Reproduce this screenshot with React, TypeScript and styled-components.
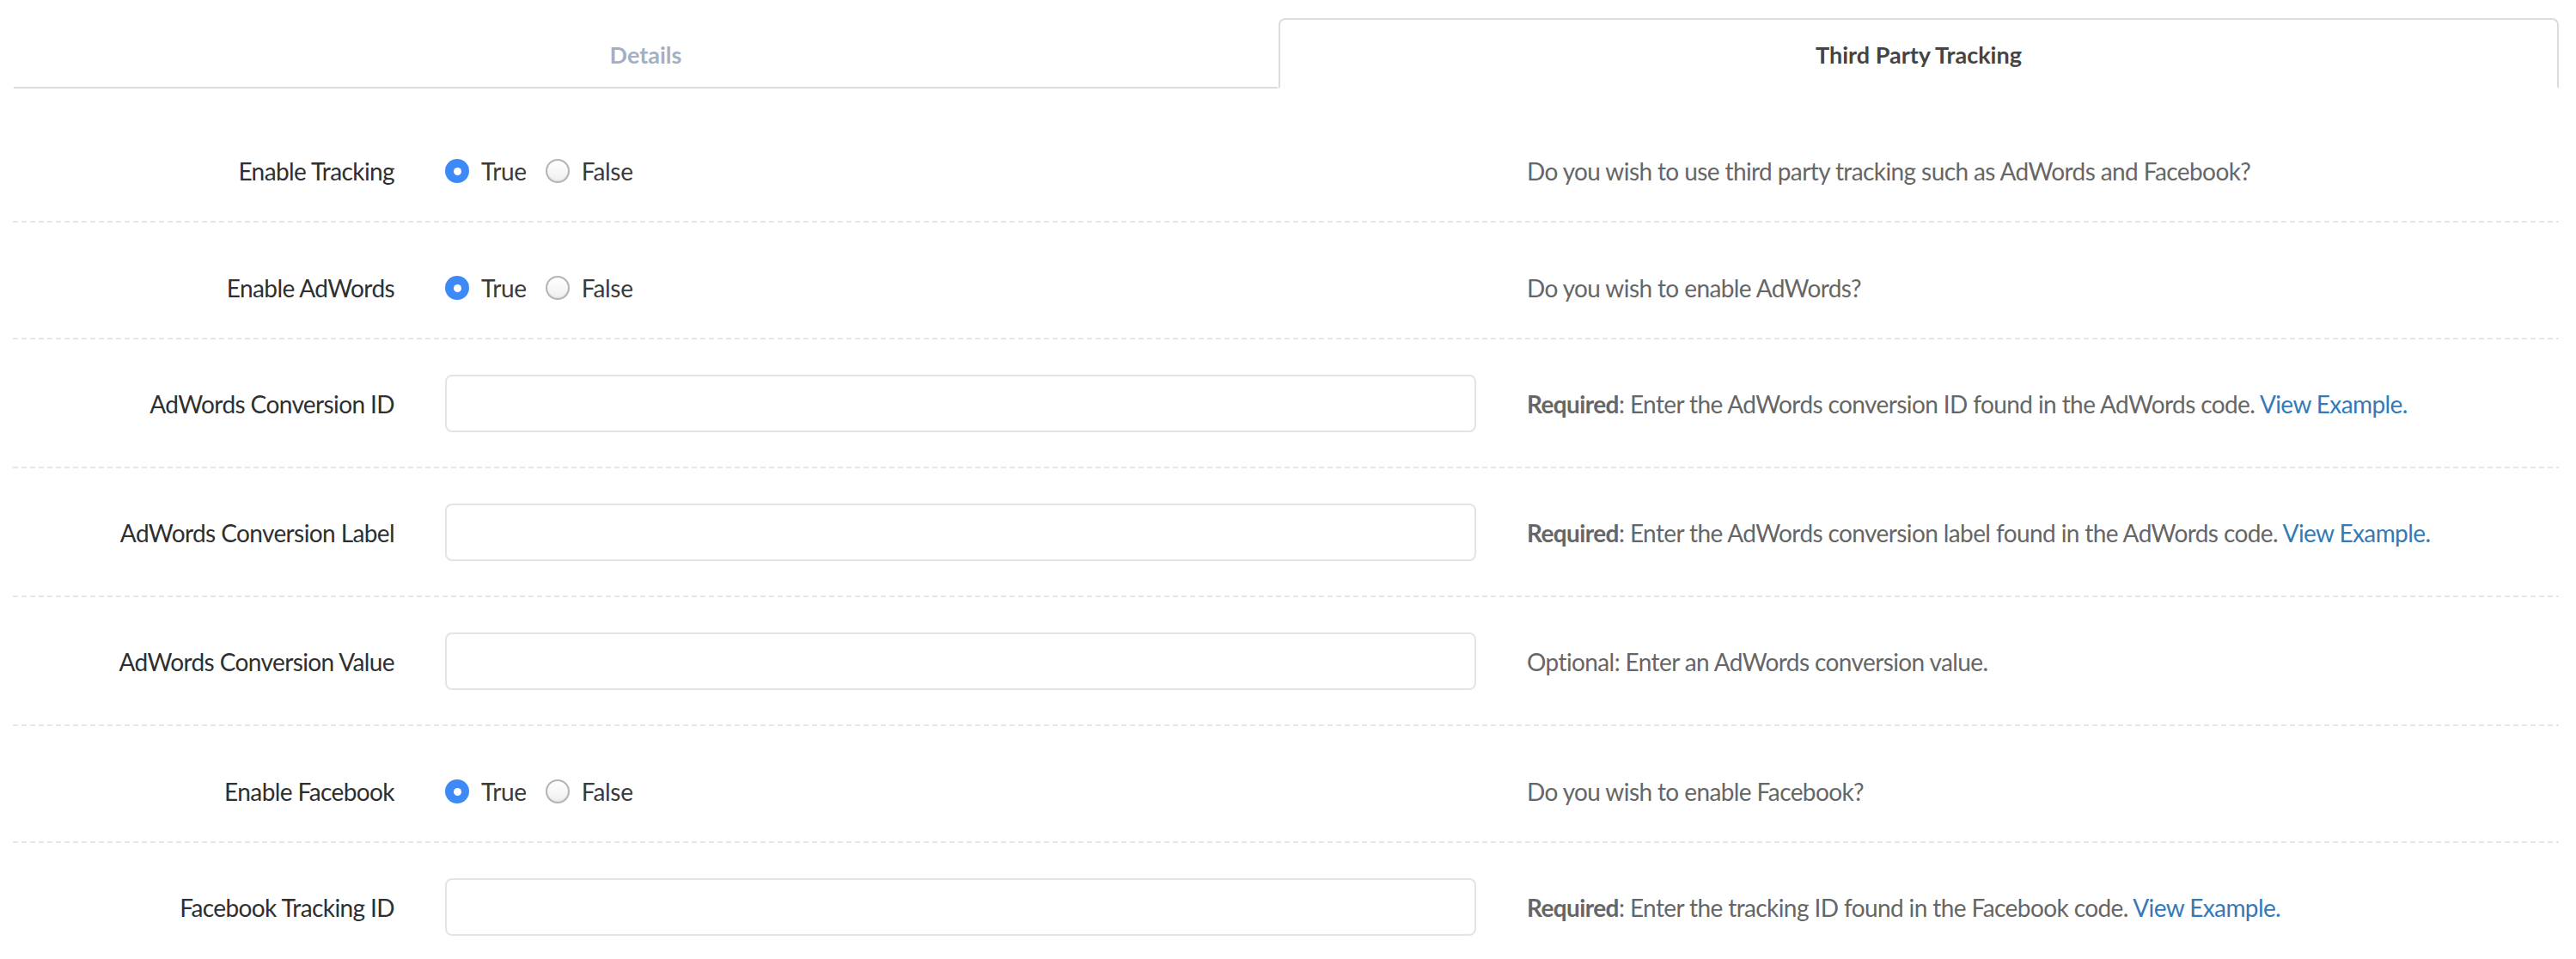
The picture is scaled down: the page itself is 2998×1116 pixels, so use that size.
import { createGlobalStyle } from "styled-components";
import styled from "styled-components";

type Field =
  | { kind: "radio"; label: string; name: string; help: string }
  | { kind: "input"; label: string; name: string; required: boolean; help: string };

const fields: Field[] = [
  { kind: "radio", label: "Enable Tracking", name: "tracking", help: "Do you wish to use third party tracking such as AdWords and Facebook?" },
  { kind: "radio", label: "Enable AdWords", name: "adwords", help: "Do you wish to enable AdWords?" },
  { kind: "input", label: "AdWords Conversion ID", name: "adwordsId", required: true, help: "Enter the AdWords conversion ID found in the AdWords code." },
  { kind: "input", label: "AdWords Conversion Label", name: "adwordsLabel", required: true, help: "Enter the AdWords conversion label found in the AdWords code." },
  { kind: "input", label: "AdWords Conversion Value", name: "adwordsValue", required: false, help: "Optional: Enter an AdWords conversion value." },
  { kind: "radio", label: "Enable Facebook", name: "facebook", help: "Do you wish to enable Facebook?" },
  { kind: "input", label: "Facebook Tracking ID", name: "facebookId", required: true, help: "Enter the tracking ID found in the Facebook code." },
];

const App = () => {
  return (
    <>
      <GlobalStyle />
      <Page>
        <Tabs>
          <Tab>Details</Tab>
          <Tab $active>Third Party Tracking</Tab>
        </Tabs>
        <Form>
          {fields.map((f) => (
            <Row key={f.name} $kind={f.kind}>
              <Label>{f.label}</Label>
              {f.kind === "radio" ? (
                <Radios>
                  <RadioOption>
                    <Radio type="radio" name={f.name} defaultChecked />
                    True
                  </RadioOption>
                  <RadioOption>
                    <Radio type="radio" name={f.name} />
                    False
                  </RadioOption>
                </Radios>
              ) : (
                <TextInput type="text" name={f.name} />
              )}
              <Help>
                {f.kind === "input" && f.required ? (
                  <>
                    <b>Required</b>: {f.help} <a href="#">View Example.</a>
                  </>
                ) : (
                  f.help
                )}
              </Help>
            </Row>
          ))}
        </Form>
      </Page>
    </>
  );
};

export default App;

const GlobalStyle = createGlobalStyle`
  html, body {
    margin: 0;
    background: #fff;
    font-family: "Lato", "Noto Sans", sans-serif;
    font-size: 28px;
    color: #333;
  }
`;

const Page = styled.div`
  padding: 21px 20px 0 15px;
`;

const Tabs = styled.div`
  display: grid;
  grid-template-columns: 1473px 1fr;
`;

const Tab = styled.div<{ $active?: boolean }>`
  height: 82px;
  box-sizing: border-box;
  display: flex;
  align-items: center;
  justify-content: center;
  font-weight: 700;
  font-size: 27px;
  color: ${({ $active }) => ($active ? "#444" : "#a4afc3")};
  border: 2px solid ${({ $active }) => ($active ? "#dcdcdc" : "transparent")};
  border-bottom: 2px solid ${({ $active }) => ($active ? "transparent" : "#dcdcdc")};
  border-radius: ${({ $active }) => ($active ? "8px 8px 0 0" : "0")};
  padding-top: 2px;
`;

const Form = styled.div`
  padding-top: 20px;
`;

const Row = styled.div<{ $kind: "radio" | "input" }>`
  display: grid;
  grid-template-columns: 444px 1200px 1fr;
  column-gap: 59px;
  align-items: center;
  padding: ${({ $kind }) => ($kind === "radio" ? "50px 0 34px" : "41px 0 42px")};
  background-image: repeating-linear-gradient(to right, #e3e7ea 0 6px, transparent 6px 10px);
  background-size: 100% 2px;
  background-repeat: no-repeat;
  background-position: left bottom;
`;

const Label = styled.div`
  text-align: right;
  line-height: 52px;
  letter-spacing: -0.6px;
  color: #2f2f2f;
`;

const Radios = styled.div`
  display: flex;
  align-items: center;
  gap: 22px;
  height: 52px;
`;

const RadioOption = styled.label`
  display: flex;
  align-items: center;
  gap: 14px;
  color: #3a3a3a;
  letter-spacing: -0.3px;
`;

const Radio = styled.input`
  appearance: none;
  margin: 0;
  width: 28px;
  height: 28px;
  border-radius: 50%;
  box-sizing: border-box;
  border: 2px solid #b4b4b4;
  background: linear-gradient(#fff, #f0f0f0);
  box-shadow: inset 0 -1px 2px rgba(0, 0, 0, 0.08);
  position: relative;

  &:checked {
    border: none;
    background: #3d8af7;
    box-shadow: none;
  }
  &:checked::after {
    content: "";
    position: absolute;
    left: 50%;
    top: 50%;
    width: 9px;
    height: 9px;
    margin: -4.5px 0 0 -4.5px;
    border-radius: 50%;
    background: #fff;
  }
`;

const TextInput = styled.input`
  box-sizing: border-box;
  width: 100%;
  height: 67px;
  border: 2px solid #e4e4e4;
  border-radius: 8px;
  padding: 0 18px;
  font: inherit;
  outline: none;
`;

const Help = styled.div`
  color: #666;
  line-height: 52px;
  letter-spacing: -0.6px;
  white-space: nowrap;

  b {
    font-weight: 700;
  }
  a {
    color: #337ab7;
    text-decoration: none;
  }
`;
